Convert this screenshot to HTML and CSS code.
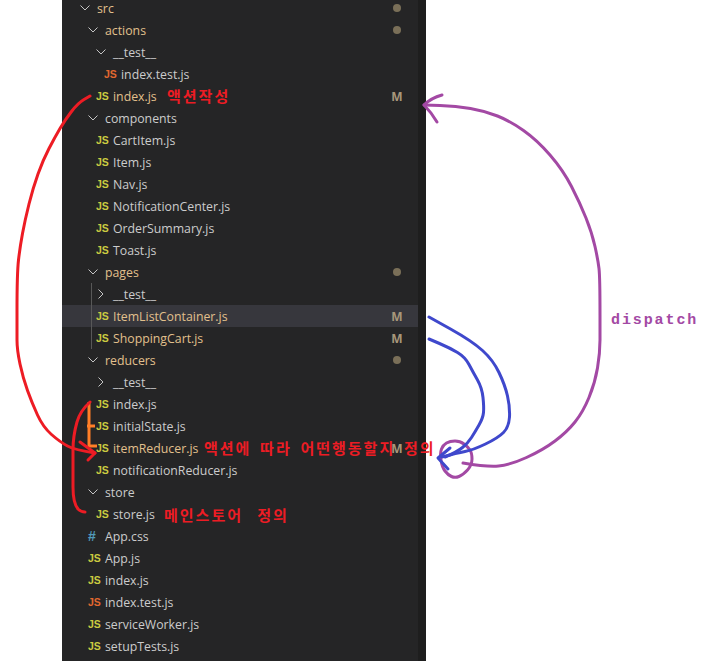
FILE: index.html
```html
<!DOCTYPE html>
<html lang="ko">
<head>
<meta charset="utf-8">
<title>Explorer</title>
<link rel="stylesheet" href="styles.css">
</head>
<body>
<main class="panel">
  <div class="tree">
    <div class="row d0 mod"><svg class="chev" viewBox="0 0 10 10"><path d="M.5 2.5 5 7 9.5 2.5"/></svg><span class="name">src</span><i class="dot"></i></div>
    <div class="row d1 mod"><svg class="chev" viewBox="0 0 10 10"><path d="M.5 2.5 5 7 9.5 2.5"/></svg><span class="name">actions</span><i class="dot"></i></div>
    <div class="row d2"><svg class="chev" viewBox="0 0 10 10"><path d="M.5 2.5 5 7 9.5 2.5"/></svg><span class="name">__test__</span></div>
    <div class="row d3"><b class="ic test">JS</b><span class="name">index.test.js</span></div>
    <div class="row d2 mod"><b class="ic js">JS</b><span class="name">index.js</span><b class="badge">M</b></div>
    <div class="row d1"><svg class="chev" viewBox="0 0 10 10"><path d="M.5 2.5 5 7 9.5 2.5"/></svg><span class="name">components</span></div>
    <div class="row d2"><b class="ic js">JS</b><span class="name">CartItem.js</span></div>
    <div class="row d2"><b class="ic js">JS</b><span class="name">Item.js</span></div>
    <div class="row d2"><b class="ic js">JS</b><span class="name">Nav.js</span></div>
    <div class="row d2"><b class="ic js">JS</b><span class="name">NotificationCenter.js</span></div>
    <div class="row d2"><b class="ic js">JS</b><span class="name">OrderSummary.js</span></div>
    <div class="row d2"><b class="ic js">JS</b><span class="name">Toast.js</span></div>
    <div class="row d1 mod"><svg class="chev" viewBox="0 0 10 10"><path d="M.5 2.5 5 7 9.5 2.5"/></svg><span class="name">pages</span><i class="dot"></i></div>
    <div class="group">
      <div class="row d2"><svg class="chev" viewBox="0 0 10 10"><path d="M2.5.5 7 5 2.5 9.5"/></svg><span class="name">__test__</span></div>
      <div class="row d2 mod hover"><b class="ic js">JS</b><span class="name">ItemListContainer.js</span><b class="badge">M</b></div>
      <div class="row d2 mod"><b class="ic js">JS</b><span class="name">ShoppingCart.js</span><b class="badge">M</b></div>
    </div>
    <div class="row d1 mod"><svg class="chev" viewBox="0 0 10 10"><path d="M.5 2.5 5 7 9.5 2.5"/></svg><span class="name">reducers</span><i class="dot"></i></div>
    <div class="row d2"><svg class="chev" viewBox="0 0 10 10"><path d="M2.5.5 7 5 2.5 9.5"/></svg><span class="name">__test__</span></div>
    <div class="row d2"><b class="ic js">JS</b><span class="name">index.js</span></div>
    <div class="row d2"><b class="ic js">JS</b><span class="name">initialState.js</span></div>
    <div class="row d2 mod"><b class="ic js">JS</b><span class="name">itemReducer.js</span><b class="badge">M</b></div>
    <div class="row d2"><b class="ic js">JS</b><span class="name">notificationReducer.js</span></div>
    <div class="row d1"><svg class="chev" viewBox="0 0 10 10"><path d="M.5 2.5 5 7 9.5 2.5"/></svg><span class="name">store</span></div>
    <div class="row d2"><b class="ic js">JS</b><span class="name">store.js</span></div>
    <div class="row d1"><b class="ic css">#</b><span class="name">App.css</span></div>
    <div class="row d1"><b class="ic js">JS</b><span class="name">App.js</span></div>
    <div class="row d1"><b class="ic js">JS</b><span class="name">index.js</span></div>
    <div class="row d1"><b class="ic test">JS</b><span class="name">index.test.js</span></div>
    <div class="row d1"><b class="ic js">JS</b><span class="name">serviceWorker.js</span></div>
    <div class="row d1"><b class="ic js">JS</b><span class="name">setupTests.js</span></div>
  </div>
  <div class="stripe"></div>
</main>
<svg class="ink" viewBox="0 0 720 661" aria-hidden="true">
  <g class="purple">
    <path d="M442 95Q431 98 424 105Q431 112 437 122"/>
    <path d="M424 105L440 105.5Q456 106 470.5 108.5Q485 111 497.5 116Q510 121 523.5 130.5Q537 140 550 155Q563 170 571.5 186.5Q580 203 586 218Q592 233 595 246.5Q598 260 599 268.5Q600 277 600 315L600 340Q600 353 597.5 368Q595 383 589 397.5Q583 412 575 422Q567 432 555 441Q543 450 526.5 457.5Q510 465 498.5 466Q487 467 463 463"/>
    <path d="M441.5 449Q443 445 446.5 443Q450 441 455 441Q460 441 464 444Q468 447 470 450Q472 453 472 459Q472 465 467.5 470Q463 475 459 476.5Q455 478 451.5 476.5Q448 475 445 471Q442 467 441 460Q440 453 441.5 449Z"/>
  </g>
  <g class="blue">
    <path d="M429 317L450.5 329Q472 341 482.5 350.5Q493 360 499 372.5Q505 385 507.5 396Q510 407 509.5 417Q509 427 503.5 432.5Q498 438 485.5 444Q473 450 465 451.5Q457 453 442 457"/>
    <path d="M429 339L439.5 343.5Q450 348 457.5 352.5Q465 357 469 364.5Q473 372 477.5 380Q482 388 483 397.5Q484 407 483.5 412.5Q483 418 479 425Q475 432 471.5 437.5Q468 443 462.5 447.5Q457 452 445 457"/>
    <path d="M450 448L438 458 448 469"/>
  </g>
  <g class="orange">
    <path d="M89 402V446H97"/>
    <path d="M87 426H95"/>
  </g>
  <g class="red">
    <path d="M90 96L84 99.5Q78 103 71.5 111.5Q65 120 60 128.5Q55 137 49 148.5Q43 160 38 174Q33 188 29 204Q25 220 22.5 233.5Q20 247 18.5 260Q17 273 17 311L17 340Q17 350 20 364Q23 378 27.5 390.5Q32 403 37.5 415Q43 427 51.5 434.5Q60 442 67.5 446Q75 450 95 453"/>
    <path d="M80 442L95 453 88 460"/>
    <path d="M90 402Q80 411 77 422Q73 436 73 450V487Q73 503 78 509Q81 512 85 512"/>
  </g>
</svg>
<span class="note note-action">액션작성</span>
<span class="note note-reducer">액션에 따라 어떤행동할지 정의</span>
<span class="note note-store">메인스토어 정의</span>
<span class="dispatch">dispatch</span>
</body>
</html>
```
FILE: styles.css
```css
html, body { margin: 0; padding: 0; height: 661px; overflow: hidden; background: #fff; }
body { font-family: "Open Sans", "Noto Sans", sans-serif; }
.panel { display: flex; width: 364px; height: 661px; margin-left: 62px; overflow: hidden; background: #252526; }
.tree { width: 356px; margin-top: -3px; }
.stripe { width: 8px; background: #1e1e1e; }
.group { position: relative; }
.group::before { content: ""; position: absolute; left: 29px; top: 0; bottom: 0; width: 1px; background: #585858; z-index: 1; }
.row { display: flex; align-items: center; height: 22px; padding-right: 15px; font-size: 12.3px; color: #cccccc; white-space: nowrap; }
.d0 { padding-left: 18px; }
.d1 { padding-left: 26px; }
.d2 { padding-left: 34px; }
.d3 { padding-left: 42px; }
.mod { color: #e2c08d; }
.hover { background: #37373d; }
.chev { flex: none; width: 10px; height: 10px; margin-right: 7px; fill: none; stroke: #c5c5c5; stroke-width: 1; }
.ic { flex: none; width: 17px; font-family: "Liberation Sans", sans-serif; font-size: 10.5px; line-height: 1; }
.js { color: #cbcb41; }
.test { color: #e2682f; }
.css { color: #519aba; font-size: 14px; width: 17px; }
.name { flex: none; }
.dot { flex: none; width: 8px; height: 8px; margin-left: auto; margin-right: 2px; border-radius: 50%; background: #7a6f58; }
.badge { flex: none; width: 12px; margin-left: auto; font-size: 12px; font-weight: 700; text-align: center; color: #a8977a; }
.ink { position: absolute; left: 0; top: 0; width: 720px; height: 661px; fill: none; stroke-width: 3; stroke-linecap: round; stroke-linejoin: round; pointer-events: none; }
.purple { stroke: #a349a4; }
.blue { stroke: #3f48cc; }
.orange { stroke: #ff7f27; stroke-linecap: butt; stroke-linejoin: miter; }
.red { stroke: #ed1c24; }
.note { position: absolute; font-family: "Noto Sans CJK KR", sans-serif; font-size: 15px; font-weight: 700; line-height: 20px; color: #ed1c24; white-space: nowrap; letter-spacing: 2px; }
.note-action { left: 167px; top: 86px; }
.note-reducer { left: 204px; top: 438px; word-spacing: 2.5px; }
.note-store { left: 164px; top: 505px; word-spacing: 8px; }
.dispatch { position: absolute; left: 611px; top: 311px; font-family: "Liberation Mono", monospace; font-size: 15px; font-weight: 700; line-height: 20px; color: #a349a4; letter-spacing: 1.9px; }
```
